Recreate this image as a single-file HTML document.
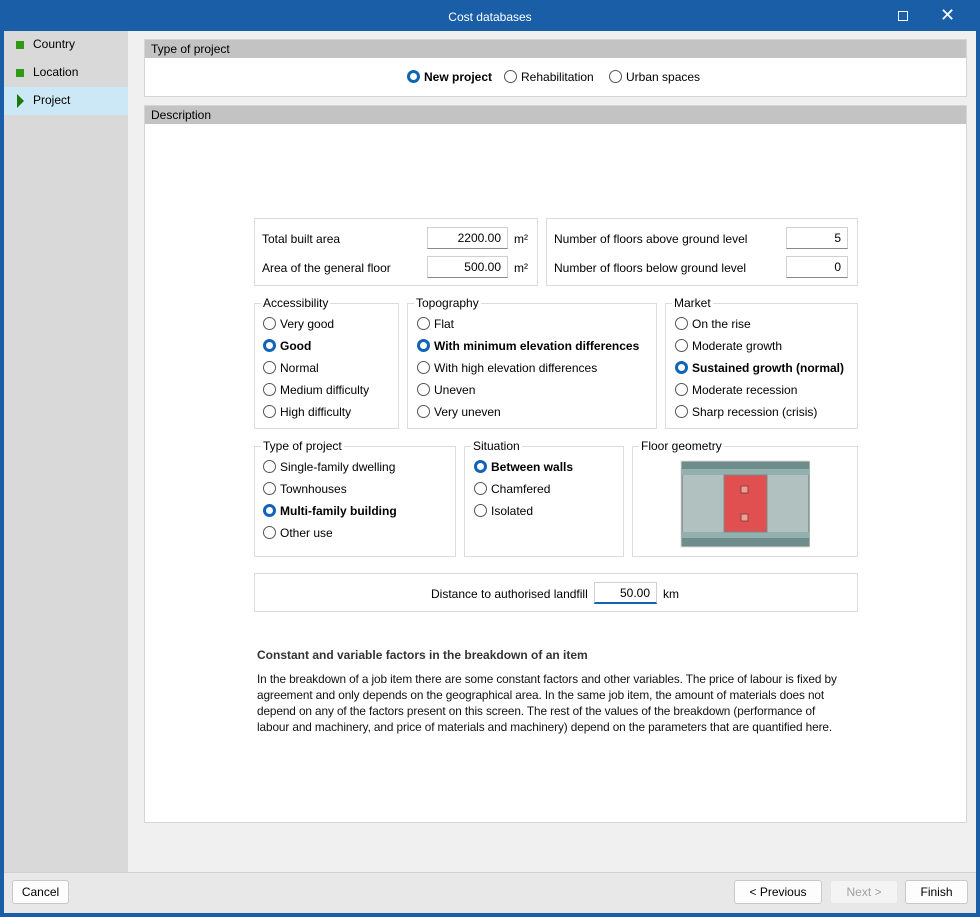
<!DOCTYPE html><html><head><style>
*{box-sizing:border-box}
body{margin:0;width:980px;height:917px;background:#1b5ea8;font-family:"Liberation Sans",sans-serif;font-size:12px;color:#000;position:relative;overflow:hidden}
.a{position:absolute}
.title{left:0;top:0;width:980px;height:31px;color:#fff;text-align:center;line-height:35px;font-size:12px}
.win{left:4px;top:31px;width:972px;height:882px;background:#f0f0f0}
.side{left:4px;top:31px;width:124px;height:841px;background:#d9d9d9}
.si{left:4px;width:124px;height:28px;line-height:26px;padding-left:29px}
.sq{position:absolute;left:12px;top:10px;width:8px;height:8px;background:#2f9a16}
.hdr{background:#c3c3c3;height:18px;line-height:18px;padding-left:6px}
.panel{border:1px solid #d5d5d5;background:#fff}
.box{border:1px solid #dcdcdc;position:absolute}
.lg{position:absolute;top:-8px;left:6px;background:#fff;padding:0 2px}
.r{position:absolute;white-space:nowrap}
.r:before{content:"";display:inline-block;width:11px;height:11px;border:1px solid #555;border-radius:50%;vertical-align:-2px;margin-right:4px;background:#fff}
.r.s{font-weight:bold}
.r.s:before{border:3px solid #0f64b8;width:7px;height:7px;background:#fff}
.inp{position:absolute;height:22px;border:1px solid #d0d0d0;border-bottom:1px solid #888;text-align:right;padding-right:6px;line-height:20px;background:#fff}
.btn{position:absolute;top:880px;height:24px;border:1px solid #c8c8c8;border-radius:3px;background:#fdfdfd;text-align:center;line-height:22px}
</style></head><body>
<div class="a title">Cost databases</div>
<div class="a" style="left:898px;top:11px;width:10px;height:10px;border:1px solid #fff"></div>
<div class="a" style="left:940px;top:5px;color:#fff;font-size:18px">✕</div>
<div class="a win"></div>
<div class="a side"></div>
<div class="a si" style="top:31px"><span class="sq"></span>Country</div>
<div class="a si" style="top:59px"><span class="sq"></span>Location</div>
<div class="a si" style="top:87px;background:#cce8f6"><span style="position:absolute;left:13px;top:7px;width:0;height:0;border-left:7px solid #1a7a10;border-top:7px solid transparent;border-bottom:7px solid transparent"></span>Project</div>

<div class="a panel" style="left:144px;top:39px;width:823px;height:58px"><div class="hdr">Type of project</div>
<span class="r s" style="left:262px;top:30px">New project</span>
<span class="r" style="left:359px;top:30px">Rehabilitation</span>
<span class="r" style="left:464px;top:30px">Urban spaces</span></div>

<div class="a panel" style="left:144px;top:105px;width:823px;height:718px"><div class="hdr">Description</div></div>

<div class="box" style="left:254px;top:218px;width:284px;height:68px"></div>
<div class="a" style="left:262px;top:232px">Total built area</div>
<div class="a" style="left:262px;top:261px">Area of the general floor</div>
<div class="inp" style="left:427px;top:227px;width:81px">2200.00</div>
<div class="inp" style="left:427px;top:256px;width:81px">500.00</div>
<div class="a" style="left:514px;top:232px">m²</div><div class="a" style="left:514px;top:261px">m²</div>

<div class="box" style="left:546px;top:218px;width:312px;height:68px"></div>
<div class="a" style="left:554px;top:232px">Number of floors above ground level</div>
<div class="a" style="left:554px;top:261px">Number of floors below ground level</div>
<div class="inp" style="left:786px;top:227px;width:62px">5</div>
<div class="inp" style="left:786px;top:256px;width:62px">0</div>

<div class="box" style="left:254px;top:303px;width:145px;height:126px"><span class="lg">Accessibility</span></div>
<span class="r" style="left:263px;top:317px">Very good</span>
<span class="r s" style="left:263px;top:339px">Good</span>
<span class="r" style="left:263px;top:361px">Normal</span>
<span class="r" style="left:263px;top:383px">Medium difficulty</span>
<span class="r" style="left:263px;top:405px">High difficulty</span>

<div class="box" style="left:407px;top:303px;width:250px;height:126px"><span class="lg">Topography</span></div>
<span class="r" style="left:417px;top:317px">Flat</span>
<span class="r s" style="left:417px;top:339px">With minimum elevation differences</span>
<span class="r" style="left:417px;top:361px">With high elevation differences</span>
<span class="r" style="left:417px;top:383px">Uneven</span>
<span class="r" style="left:417px;top:405px">Very uneven</span>

<div class="box" style="left:665px;top:303px;width:193px;height:126px"><span class="lg">Market</span></div>
<span class="r" style="left:675px;top:317px">On the rise</span>
<span class="r" style="left:675px;top:339px">Moderate growth</span>
<span class="r s" style="left:675px;top:361px">Sustained growth (normal)</span>
<span class="r" style="left:675px;top:383px">Moderate recession</span>
<span class="r" style="left:675px;top:405px">Sharp recession (crisis)</span>

<div class="box" style="left:254px;top:446px;width:202px;height:111px"><span class="lg">Type of project</span></div>
<span class="r" style="left:263px;top:460px">Single-family dwelling</span>
<span class="r" style="left:263px;top:482px">Townhouses</span>
<span class="r s" style="left:263px;top:504px">Multi-family building</span>
<span class="r" style="left:263px;top:526px">Other use</span>

<div class="box" style="left:464px;top:446px;width:160px;height:111px"><span class="lg">Situation</span></div>
<span class="r s" style="left:474px;top:460px">Between walls</span>
<span class="r" style="left:474px;top:482px">Chamfered</span>
<span class="r" style="left:474px;top:504px">Isolated</span>

<div class="box" style="left:632px;top:446px;width:226px;height:111px"><span class="lg">Floor geometry</span></div>
<svg class="a" style="left:680px;top:460px" width="130" height="88" viewBox="0 0 130 88">
<rect x="0" y="0" width="130" height="88" fill="#eeeeee"/>
<rect x="2" y="2" width="127" height="84" fill="#b1c1bf" stroke="#5a7373"/>
<rect x="2" y="2" width="127" height="7" fill="#6e8c8b"/>
<rect x="2" y="9" width="127" height="6" fill="#92b0ad"/>
<rect x="2" y="72" width="127" height="6" fill="#92b0ad"/>
<rect x="2" y="78" width="127" height="8" fill="#6e8c8b"/>
<rect x="44" y="15" width="43" height="57" fill="#e05050" stroke="#7a8a8a"/>
<rect x="61" y="26" width="7" height="7" fill="#f0a090" stroke="#844"/>
<rect x="61" y="54" width="7" height="7" fill="#f0a090" stroke="#844"/>
</svg>

<div class="box" style="left:254px;top:573px;width:604px;height:39px"></div>
<div class="a" style="left:431px;top:587px">Distance to authorised landfill</div>
<div class="inp" style="left:594px;top:582px;width:63px;border-bottom:2px solid #0f64b8">50.00</div>
<div class="a" style="left:663px;top:587px">km</div>

<div class="a" style="left:257px;top:648px;font-weight:bold;color:#333">Constant and variable factors in the breakdown of an item</div>
<div class="a" style="left:257px;top:671px;line-height:16px;color:#111;font-size:11.8px;letter-spacing:-0.1px;white-space:nowrap">In the breakdown of a job item there are some constant factors and other variables. The price of labour is fixed by<br>agreement and only depends on the geographical area. In the same job item, the amount of materials does not<br>depend on any of the factors present on this screen. The rest of the values of the breakdown (performance of<br>labour and machinery, and price of materials and machinery) depend on the parameters that are quantified here.</div>

<div class="a" style="left:4px;top:872px;width:972px;height:41px;background:#e8e8e8;border-top:1px solid #d0d0d0"></div>
<div class="btn" style="left:12px;width:57px">Cancel</div>
<div class="btn" style="left:734px;width:88px">&lt; Previous</div>
<div class="btn" style="left:830px;width:68px;color:#a0a0a0;background:#f4f4f4;border-color:#e6e6e6">Next &gt;</div>
<div class="btn" style="left:905px;width:63px">Finish</div>
</body></html>
